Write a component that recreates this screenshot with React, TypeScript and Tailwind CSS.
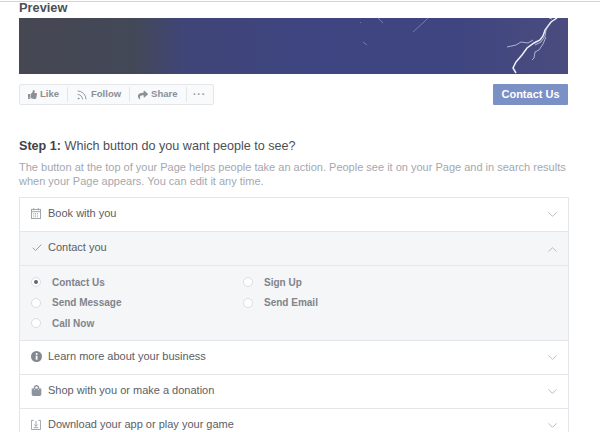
import { Check, ChevronDown, ChevronUp, Rss } from "lucide-react";
import { FaShare, FaShoppingBag, FaThumbsUp } from "react-icons/fa";
import type { ReactNode } from "react";

function CalendarIcon() {
  return (
    <svg width="10" height="11" viewBox="0 0 11 12" fill="none" stroke="#9a9fa8" strokeWidth="1">
      <rect x="0.5" y="1.5" width="10" height="10" />
      <path d="M0.5 4h10M3 0v2.500M8 0v2.500" />
      <path d="M2.500 6h6M2.500 7.800h6M2.500 9.600h6" strokeDasharray="1 1" />
    </svg>
  );
}

function InfoIcon() {
  return (
    <svg width="11" height="11" viewBox="0 0 11 11">
      <circle cx="5.500" cy="5.500" r="5.500" fill="#84888f" />
      <rect x="4.700" y="4.700" width="1.800" height="4" fill="#fff" />
      <circle cx="5.600" cy="3" r="1" fill="#fff" />
    </svg>
  );
}

function DownloadIcon() {
  return (
    <svg width="10" height="11" viewBox="0 0 11 12" fill="none" stroke="#9a9fa8" strokeWidth="1">
      <path d="M3 1.500H0.500v10h10v-10H8" />
      <path d="M5.500 2v6M3.500 6l2 2 2-2M3 9.500h5" />
    </svg>
  );
}

function Row({ icon, label, open }: { icon: ReactNode; label: string; open?: boolean }) {
  return (
    <div
      className={`flex h-[34px] items-center border-b border-[#e5e6e9] pr-[8px] pb-[2px] pl-[11px] ${open ? "bg-[#f5f6f7]" : "bg-white"}`}
    >
      <span className="flex w-[17px] items-center">{icon}</span>
      <span className="flex-1 text-[11px] text-[#5a5e65]">{label}</span>
      {open ? (
        <ChevronUp size={15} strokeWidth={1.500} className="mt-[3px] text-[#b4b8bf]" />
      ) : (
        <ChevronDown size={15} strokeWidth={1.500} className="mt-px text-[#b4b8bf]" />
      )}
    </div>
  );
}

function Radio({ label, checked }: { label: string; checked?: boolean }) {
  return (
    <div className="flex h-[20.500px] items-center">
      <span className="flex h-[10px] w-[10px] items-center justify-center rounded-full border border-[#dadde1] bg-white">
        {checked && <span className="h-[4px] w-[4px] rounded-full bg-[#606770]" />}
      </span>
      <span className="ml-[11px] text-[10px] font-bold text-[#80848b]">{label}</span>
    </div>
  );
}

function PageButton({ children }: { children: ReactNode }) {
  return (
    <div className="flex items-center gap-[3px] border-r border-[#e5e6e9] px-[8px] text-[9.500px] font-bold text-[#8b8f96]">
      {children}
    </div>
  );
}

export default function App() {
  return (
    <div className="h-[432px] w-[600px] overflow-hidden bg-white font-['Liberation_Sans',Arial,sans-serif]">
      <div className="mt-px h-px bg-[#d4d4d4]" />
      <div className="ml-[19px] w-[550px]">
        <h2 className="h-[16px] text-[12.800px] leading-[11px] font-bold text-[#4b4f56]">Preview</h2>

        <div className="h-[56px] w-[549px] overflow-hidden bg-[linear-gradient(90deg,#454752_0%,#434857_21%,#3f4577_30%,#3f4582_55%,#3f4580_80%,#4a4c7e_100%)]">
          <svg width="549" height="56" viewBox="0 0 549 56" fill="none">
            <g stroke="#8d92c0" strokeWidth="0.7">
              <path d="M394 14l11-10 4-4" />
              <path d="M359 0l5 5M341 4l1 1" />
              <path d="M344 24l4 3" />
            </g>
            <g stroke="#c8cbe4" strokeWidth="0.8">
              <path d="M488 29l9-2 5-3 7 1 5-3" />
              <path d="M527 19l-3 7-4 6-4 2-1 6-2 2" />
              <path d="M533 1l-3-1" />
            </g>
            <path
              d="M538 0l-6 4-6 8-2 6-3 4-6 3-7 5-5 7-6 7-3 6 3 5"
              stroke="#eef0fa"
              strokeWidth="1.500"
            />
            <path d="M530 6l-3 6-1 6-4 6-6 3" stroke="#d3d6ea" strokeWidth="0.8" />
          </svg>
        </div>

        <div className="mt-[10px] flex h-[21px] w-[549px] justify-between">
          <div className="flex h-full items-center rounded-[2px] border border-[#e5e6e9] bg-[#f9fafb]">
            <PageButton>
              <FaThumbsUp size={9} /> Like
            </PageButton>
            <PageButton>
              <Rss size={12} strokeWidth={1.800} /> Follow
            </PageButton>
            <PageButton>
              <FaShare size={10} /> Share
            </PageButton>
            <div className="px-[6.500px] text-[10px] leading-none font-bold tracking-[1px] text-[#8d949e]">···</div>
          </div>
          <div className="flex h-full w-[75px] items-center justify-center rounded-[1px] bg-[#7b90c4] text-[11px] font-bold text-white">
            Contact Us
          </div>
        </div>

        <h3 className="mt-[31px] h-[20px] text-[12.600px] leading-[20px] text-[#4b4f56]">
          <span className="font-bold text-[#3f4349]">Step 1:</span> Which button do you want people to see?
        </h3>
        <p className="mt-[5px] w-[552px] text-[11px] leading-[13.500px] text-[#a4a8af]">
          The button at the top of your Page helps people take an action. People see it on your Page and in search
          results when your Page appears. You can edit it any time.
        </p>

        <div className="mt-[9px] border border-b-0 border-[#e5e6e9]">
          <Row icon={<CalendarIcon />} label="Book with you" />
          <Row icon={<Check size={12} strokeWidth={1.800} className="text-[#8d949e]" />} label="Contact you" open />
          <div className="grid h-[75px] grid-cols-[212px_1fr] content-start border-b border-[#e5e6e9] bg-[#f5f6f7] pt-[6px] pl-[11px]">
            <Radio label="Contact Us" checked />
            <Radio label="Sign Up" />
            <Radio label="Send Message" />
            <Radio label="Send Email" />
            <Radio label="Call Now" />
          </div>
          <Row icon={<InfoIcon />} label="Learn more about your business" />
          <Row icon={<FaShoppingBag size={11} className="text-[#8d949e]" />} label="Shop with you or make a donation" />
          <Row icon={<DownloadIcon />} label="Download your app or play your game" />
        </div>
      </div>
    </div>
  );
}
